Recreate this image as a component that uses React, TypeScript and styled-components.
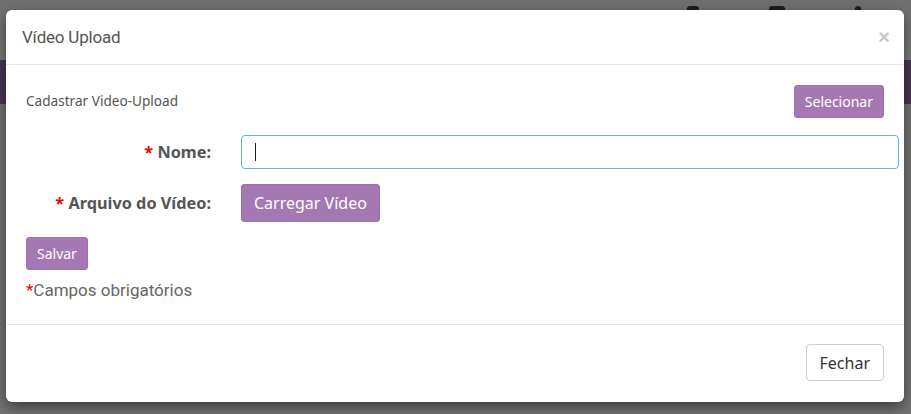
import React from "react";
import styled, { createGlobalStyle } from "styled-components";

const Global = createGlobalStyle`
  html, body { margin: 0; padding: 0; }
  body { background: #7a7a7a; width: 911px; height: 414px; overflow: hidden; font-family: "Noto Sans", sans-serif; }
`;

const Page = styled.div`
  position: relative;
  width: 911px;
  height: 414px;
  background: #787878;
  display: flex;
  flex-direction: column;
`;

const TopStrip = styled.div`
  height: 60px;
  background: linear-gradient(#707070, #7c7c7c);
  display: flex;
  justify-content: flex-end;
  gap: 70px;
  padding-right: 50px;
`;

const TopIcon = styled.div<{ $w: number }>`
  width: ${(p) => p.$w}px;
  height: 16px;
  margin-top: 6px;
  background: #1e1e1e;
  border-radius: 3px;
`;

const NavBand = styled.div`
  height: 44px;
  background: #4a3752;
`;

const Rest = styled.div`
  flex: 1;
  background: #747474;
`;

const Dialog = styled.div`
  position: absolute;
  left: 6px;
  top: 10px;
  width: 898px;
  height: 392px;
  background: #fff;
  border-radius: 6px;
  box-shadow: 0 5px 15px rgba(0, 0, 0, 0.5);
  display: flex;
  flex-direction: column;
  overflow: hidden;
`;

const Header = styled.div`
  height: 55px;
  box-sizing: border-box;
  border-bottom: 1px solid #e5e5e5;
  display: flex;
  align-items: center;
  justify-content: space-between;
  padding: 0 16px 0 16px;
`;

const Title = styled.h4`
  margin: 0;
  font-family: Roboto, sans-serif;
  font-size: 17px;
  font-weight: 400;
  color: #555;
  letter-spacing: -0.2px;
`;

const Close = styled.span`
  font-family: "Liberation Sans", Arial, sans-serif;
  font-size: 20px;
  font-weight: 700;
  color: #c8c8c8;
  line-height: 1;
  margin-right: -2px;
`;

const Body = styled.div`
  flex: 1;
  padding: 20px 20px 0 20px;
  display: flex;
  flex-direction: column;
`;

const TopRow = styled.div`
  display: flex;
  align-items: center;
  justify-content: space-between;
  height: 33px;
`;

const Subtitle = styled.span`
  font-size: 13.6px;
  color: #555;
  margin-top: -3px;
`;

const PurpleButton = styled.button<{ $size?: "lg" }>`
  background: #a577b3;
  color: #fff;
  border: 1px solid #a071ae;
  border-radius: 3px;
  font-family: "Noto Sans", sans-serif;
  font-size: ${(p) => (p.$size === "lg" ? "16px" : "14px")};
  height: ${(p) => (p.$size === "lg" ? "38px" : "33px")};
  padding: ${(p) => (p.$size === "lg" ? "0 12px" : "0 10px")};
  cursor: pointer;
`;

const Form = styled.div`
  display: grid;
  grid-template-columns: 200px 1fr;
  column-gap: 15px;
  row-gap: 15px;
  margin-top: 17px;
  margin-right: -15px;
  align-items: center;
`;

const Label = styled.label`
  text-align: right;
  padding-right: 15px;
  font-size: 16.3px;
  font-weight: 700;
  color: #555;
`;

const Req = styled.span`
  color: #e00;
`;

const Input = styled.div`
  height: 34px;
  box-sizing: border-box;
  border: 1px solid #66afe9;
  border-radius: 4px;
  display: flex;
  align-items: center;
  padding-left: 13px;
`;

const Caret = styled.div`
  width: 1px;
  height: 18px;
  background: #222;
`;

const ButtonCell = styled.div`
  display: flex;
`;

const SaveRow = styled.div`
  margin-top: 15px;
  display: flex;
`;

const Note = styled.div`
  margin-top: 10px;
  font-family: Roboto, sans-serif;
  font-size: 17px;
  color: #666;
`;

const Footer = styled.div`
  height: 78px;
  box-sizing: border-box;
  border-top: 1px solid #e5e5e5;
  display: flex;
  justify-content: flex-end;
  align-items: flex-start;
  padding: 19px 20px 0 20px;
`;

const DefaultButton = styled.button`
  height: 37px;
  padding: 0 13px;
  background: #fff;
  border: 1px solid #ccc;
  border-radius: 4px;
  font-family: "Noto Sans", sans-serif;
  font-size: 16px;
  color: #333;
`;

export default function App() {
  return (
    <>
      <Global />
      <Page>
        <TopStrip>
          <TopIcon $w={12} />
          <TopIcon $w={16} />
          <TopIcon $w={6} />
        </TopStrip>
        <NavBand />
        <Rest />
        <Dialog>
          <Header>
            <Title>Vídeo Upload</Title>
            <Close>×</Close>
          </Header>
          <Body>
            <TopRow>
              <Subtitle>Cadastrar Video-Upload</Subtitle>
              <PurpleButton>Selecionar</PurpleButton>
            </TopRow>
            <Form>
              <Label>
                <Req>*</Req> Nome:
              </Label>
              <Input>
                <Caret />
              </Input>
              <Label>
                <Req>*</Req> Arquivo do Vídeo:
              </Label>
              <ButtonCell>
                <PurpleButton $size="lg">Carregar Vídeo</PurpleButton>
              </ButtonCell>
            </Form>
            <SaveRow>
              <PurpleButton>Salvar</PurpleButton>
            </SaveRow>
            <Note>
              <Req>*</Req>Campos obrigatórios
            </Note>
          </Body>
          <Footer>
            <DefaultButton>Fechar</DefaultButton>
          </Footer>
        </Dialog>
      </Page>
    </>
  );
}
